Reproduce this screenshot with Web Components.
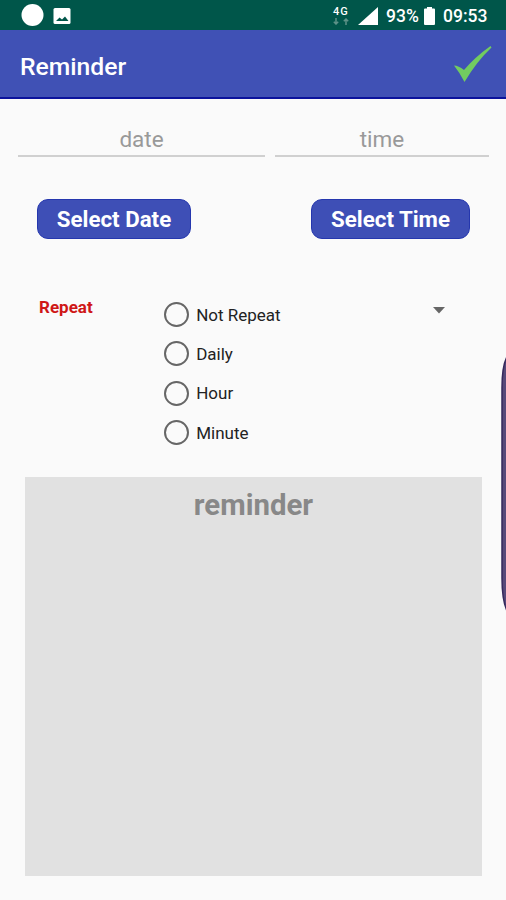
<!DOCTYPE html>
<html lang="en"><head><meta charset="utf-8"><title>Reminder</title>
<style>
html,body{margin:0;height:100%}
body{background:#fafafa;font-family:Roboto,"Liberation Sans",sans-serif;overflow:hidden}
</style></head><body>
<reminder-screen></reminder-screen>
<script>
const define = (name, html) => customElements.define(name, class extends HTMLElement {
  constructor() {
    super();
    this.attachShadow({ mode: 'open' }).innerHTML = html;
  }
});

define('status-bar', `<style>
:host{display:flex;align-items:center;height:30px;box-sizing:border-box;padding:1px 19px 0 21px;background:#00564a;color:#fff;font-weight:500;font-size:17.500px;line-height:30px}
svg{display:block;flex:none}
.gap{flex:1}
.net{width:17px;margin-right:8px;font-size:11px;line-height:11px;letter-spacing:.9px}
.net svg{margin-top:1px}
.pct{width:33px;margin-left:8px;margin-right:1px;white-space:nowrap}
.bat{margin:0 8px 0 4px}
.clock{width:44px;white-space:nowrap}
</style>
<svg width="23" height="23"><circle cx="11.5" cy="11" r="11" fill="#fff"/></svg>
<svg width="18" height="18" style="margin-left:9px"><rect x=".5" y="1" width="17" height="16" rx="1.500" fill="#fff"/><path d="M3 14l3.500-3.500 2.500 2L12 9.500l3.500 4.500z" fill="#00564a"/></svg>
<div class="gap"></div>
<div class="net">4G<svg width="17" height="7" fill="none" stroke="#5d9288" stroke-width="1.500"><path d="M3 0v6M.8 3.8L3 6l2.200-2.200M13 7V1M10.800 3.200L13 1l2.200 2.200"/></svg></div>
<svg width="20" height="18"><path d="M0 18L20 0v18z" fill="#fff"/></svg>
<div class="pct">93%</div>
<svg class="bat" width="11" height="18"><path d="M3 0h5v1.500h2q1 0 1 1v14.500q0 1-1 1H1q-1 0-1-1V2.500q0-1 1-1h2z" fill="#fff"/></svg>
<div class="clock">09:53</div>`);

define('app-bar', `<style>
:host{display:flex;align-items:center;justify-content:space-between;height:69px;box-sizing:border-box;padding:0 14px 0 20px;background:#4051b5;border-bottom:2px solid #0b139c;color:#fff;font-size:24.700px;font-weight:500}
.title{margin-top:5px}
svg{display:block;margin-top:2px}
</style><span class="title"><slot></slot></span>
<svg width="38" height="37"><path d="M0 19.500Q4.500 19.500 10 24Q21 11 36.500 0L37.500 1.500Q23 15 10.500 36Q6 27 0 19.500z" fill="#72cb60"/></svg>`);

define('text-field', `<style>
:host{display:block;box-sizing:border-box;height:34px;border-bottom:2px solid #d0d0d0;text-align:center;color:#999;font-size:22.500px;line-height:33px}
</style><slot></slot>`);

define('pill-button', `<style>
:host{display:block;box-sizing:border-box;height:40px;border:1.500px solid #2537ae;border-radius:11px;background:#3e4fb6;color:#fff;text-align:center;font-weight:700;font-size:22.300px;line-height:39px;white-space:nowrap}
</style><slot></slot>`);

define('radio-option', `<style>
:host{display:flex;align-items:center;height:39.300px;color:#222;font-size:17px}
i{box-sizing:border-box;width:25px;height:25px;margin-right:7.200px;border:2px solid #666;border-radius:50%}
</style><i></i><span><slot></slot></span>`);

define('note-area', `<style>
:host{display:block;height:399px;background:#e1e1e1;color:#888;text-align:center;font-size:29.400px;font-weight:700;line-height:56px}
</style><slot></slot>`);

define('edge-handle', `<style>
:host{position:absolute;right:0;top:354px}
svg{display:block}
</style><svg width="5" height="260"><path d="M7 1Q1 10 1 34V224Q1 248 7 259" fill="#57497a" stroke="#35285c" stroke-width="1.500"/></svg>`);

define('reminder-screen', `<style>
:host{display:block;position:relative;height:900px;overflow:hidden}
.fields{display:grid;grid-template-columns:247px 214px;gap:10px;padding:24px 17px 0 18px}
.buttons{display:flex;justify-content:space-between;padding:42px 36px 0 37px}
.d{width:154px}.t{width:159px}
.repeat{display:grid;grid-template-columns:125px 1fr 12px;padding:56px 61px 0 39px;height:238px;box-sizing:border-box}
.label{color:#cf1717;font-weight:700;font-size:17px;line-height:20px;padding-top:2px}
.arrow{display:block;margin-top:12px}
note-area{margin:0 24px 0 25px}
</style>
<status-bar></status-bar>
<app-bar>Reminder</app-bar>
<div class="fields"><text-field>date</text-field><text-field>time</text-field></div>
<div class="buttons"><pill-button class="d">Select Date</pill-button><pill-button class="t">Select Time</pill-button></div>
<div class="repeat"><div class="label">Repeat</div>
<div><radio-option>Not Repeat</radio-option><radio-option>Daily</radio-option><radio-option>Hour</radio-option><radio-option>Minute</radio-option></div>
<svg class="arrow" width="12" height="7"><path d="M0 0h12L6 6.500z" fill="#666"/></svg></div>
<note-area>reminder</note-area>
<edge-handle></edge-handle>`);
</script>
</body></html>
